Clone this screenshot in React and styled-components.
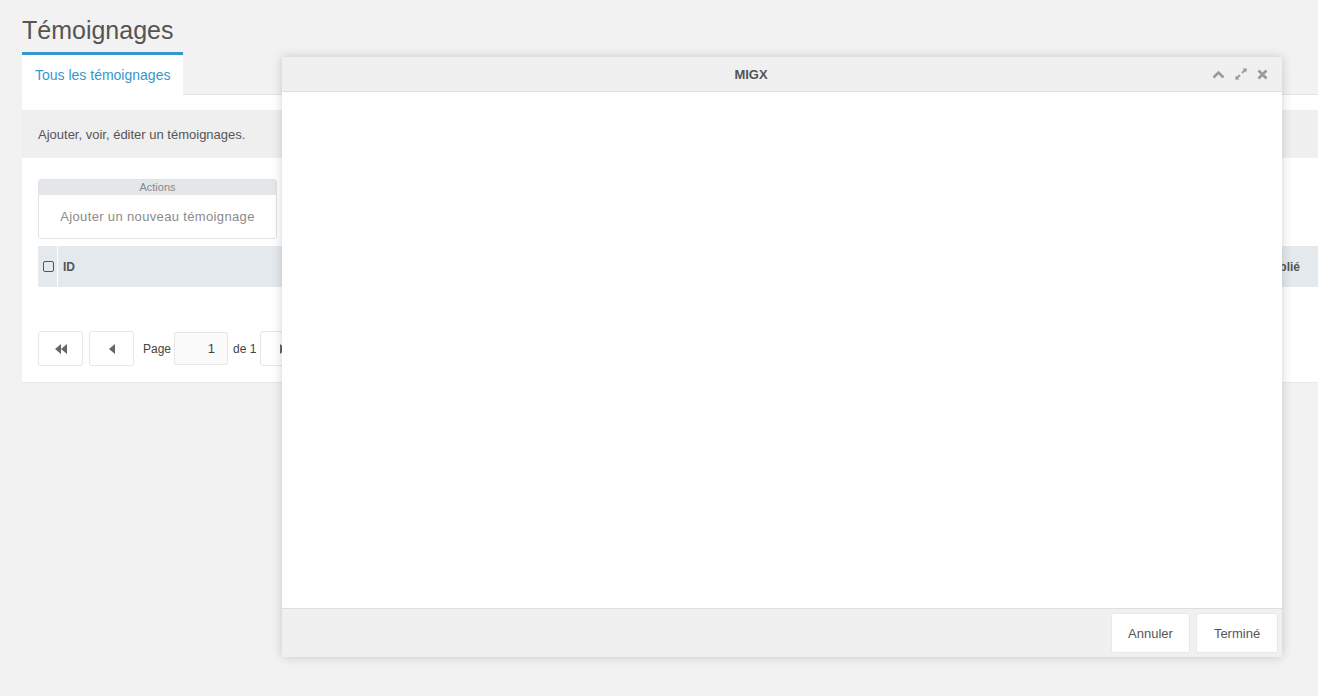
import React from "react";
import styled, { createGlobalStyle } from "styled-components";

const GlobalStyle = createGlobalStyle`
  html, body { margin: 0; padding: 0; }
  body {
    background: #f2f2f2;
    font-family: "Liberation Sans", Arial, Helvetica, sans-serif;
    color: #555;
    overflow: hidden;
  }
`;

const Page = styled.div`
  position: relative;
  width: 1318px;
  height: 696px;
  padding: 15px 0 0 22px;
  box-sizing: border-box;
  overflow: hidden;
`;

const Title = styled.h2`
  margin: 0;
  font-size: 25px;
  line-height: 30px;
  font-weight: normal;
  color: #555;
`;

const TabStrip = styled.div`
  display: flex;
  margin-top: 7px;
  position: relative;
  z-index: 1;
`;

const Tab = styled.div`
  height: 40px;
  border-top: 3px solid #3697cd;
  background: #fff;
  padding: 0 13px;
  display: flex;
  align-items: center;
  font-size: 14px;
  color: #3697cd;
  margin-bottom: -1px;
`;

const Panel = styled.div`
  background: #fff;
  border-top: 1px solid #e4e4e4;
  padding: 15px 0 16px;
  box-shadow: 0 1px 1px rgba(0, 0, 0, 0.04);
`;

const DescBar = styled.div`
  height: 48px;
  background: #efefef;
  display: flex;
  align-items: center;
  padding-left: 16px;
  font-size: 13px;
  color: #555;
`;

const Body = styled.div`
  padding-left: 16px;
`;

const ActionsBox = styled.div`
  width: 239px;
  margin-top: 21px;
  border: 1px solid #e2e2e2;
  border-radius: 3px;
  overflow: hidden;
  box-sizing: border-box;
`;

const ActionsHead = styled.div`
  height: 15px;
  background: #e4e7ea;
  text-align: center;
  font-size: 11px;
  line-height: 15px;
  color: #888;
`;

const ActionsBody = styled.div`
  height: 43px;
  display: flex;
  align-items: center;
  justify-content: center;
  font-size: 13px;
  letter-spacing: 0.35px;
  color: #8a8a8a;
  background: #fff;
`;

const TableHead = styled.div`
  margin-top: 7px;
  height: 41px;
  background: #e4e9ee;
  display: flex;
  align-items: center;
`;

const CheckCell = styled.div`
  width: 19px;
  height: 100%;
  display: flex;
  align-items: center;
  justify-content: center;
  border-right: 1px solid #fff;
`;

const CheckBox = styled.span`
  display: block;
  width: 9px;
  height: 9px;
  margin-left: 1px;
  border: 1.5px solid #555;
  border-radius: 2px;
`;

const HeadCell = styled.div`
  flex: ${(p) => (p.$grow ? 1 : "none")};
  padding: ${(p) => (p.$right ? "0 18px 0 0" : "0 0 0 5px")};
  font-size: 12px;
  font-weight: bold;
  color: #555;
`;

const Pager = styled.div`
  margin-top: 44px;
  display: flex;
  align-items: center;
  height: 35px;
`;

const PageButton = styled.div`
  width: 45px;
  height: 35px;
  box-sizing: border-box;
  border: 1px solid #e6e6e6;
  border-radius: 3px;
  background: #fff;
  display: flex;
  align-items: center;
  justify-content: center;
  margin-right: ${(p) => p.$mr || 0}px;
`;

const PagerText = styled.span`
  font-size: 12px;
  color: #444;
  margin: 0 ${(p) => p.$mr || 0}px 0 ${(p) => p.$ml || 0}px;
`;

const PageInput = styled.div`
  width: 54px;
  height: 33px;
  box-sizing: border-box;
  border: 1px solid #e6e6e6;
  border-radius: 2px;
  background: #fafafa;
  display: flex;
  align-items: center;
  justify-content: flex-end;
  padding-right: 12px;
  font-size: 13px;
  color: #444;
`;

const Modal = styled.div`
  position: absolute;
  left: 282px;
  top: 57px;
  width: 1000px;
  height: 600px;
  background: #fff;
  display: flex;
  flex-direction: column;
  box-shadow: 0 0 10px rgba(0, 0, 0, 0.18);
  z-index: 5;
`;

const ModalHead = styled.div`
  height: 34px;
  flex: none;
  background: #f0f0f0;
  border-bottom: 1px solid #dedede;
  position: relative;
  display: flex;
  align-items: center;
  justify-content: center;
  padding-right: 62px;
  font-size: 13px;
  font-weight: bold;
  color: #555;
`;

const HeadTools = styled.div`
  position: absolute;
  right: 14px;
  top: 0;
  height: 100%;
  display: flex;
  align-items: center;
  gap: 9px;
`;

const ModalBody = styled.div`
  flex: 1;
  background: #fff;
`;

const ModalFoot = styled.div`
  height: 48px;
  flex: none;
  background: #f0f0f0;
  border-top: 1px solid #dedede;
  display: flex;
  align-items: center;
  justify-content: flex-end;
  gap: 6px;
  padding-right: 4px;
`;

const FootButton = styled.div`
  width: ${(p) => p.$w}px;
  height: 40px;
  box-sizing: border-box;
  background: #fff;
  border: 1px solid #e8e8e8;
  border-radius: 3px;
  display: flex;
  align-items: center;
  justify-content: center;
  font-size: 13px;
  color: #555;
`;

const ChevronUp = () => (
  <svg width="13" height="9" viewBox="0 0 13 9">
    <path d="M1.5 7.5 L6.5 2.5 L11.5 7.5" fill="none" stroke="#9a9a9a" strokeWidth="2.6" />
  </svg>
);

const Expand = () => (
  <svg width="14" height="14" viewBox="0 0 14 14">
    <path d="M8 6 L12 2" stroke="#9a9a9a" strokeWidth="1.8" />
    <path d="M8.5 1.5 H12.5 V5.5 Z" fill="#9a9a9a" />
    <path d="M6 8 L2 12" stroke="#9a9a9a" strokeWidth="1.8" />
    <path d="M1.5 8.5 V12.5 H5.5 Z" fill="#9a9a9a" />
  </svg>
);

const Close = () => (
  <svg width="11" height="11" viewBox="0 0 11 11">
    <path d="M1.5 1.5 L9.5 9.5 M9.5 1.5 L1.5 9.5" stroke="#9a9a9a" strokeWidth="2.6" />
  </svg>
);

const DoubleLeft = () => (
  <svg width="12" height="10" viewBox="0 0 12 10">
    <path d="M6 0 V10 L0 5 Z M12 0 V10 L6 5 Z" fill="#666" />
  </svg>
);

const Left = () => (
  <svg width="6" height="10" viewBox="0 0 6 10">
    <path d="M6 0 V10 L0 5 Z" fill="#666" />
  </svg>
);

const Right = () => (
  <svg width="6" height="10" viewBox="0 0 6 10">
    <path d="M0 0 V10 L6 5 Z" fill="#666" />
  </svg>
);

export default function App() {
  return (
    <>
      <GlobalStyle />
      <Page>
        <Title>Témoignages</Title>
        <TabStrip>
          <Tab>Tous les témoignages</Tab>
        </TabStrip>
        <Panel>
          <DescBar>Ajouter, voir, éditer un témoignages.</DescBar>
          <Body>
            <ActionsBox>
              <ActionsHead>Actions</ActionsHead>
              <ActionsBody>Ajouter un nouveau témoignage</ActionsBody>
            </ActionsBox>
            <TableHead>
              <CheckCell>
                <CheckBox />
              </CheckCell>
              <HeadCell $grow>ID</HeadCell>
              <HeadCell $right>Publié</HeadCell>
            </TableHead>
            <Pager>
              <PageButton $mr={6}>
                <DoubleLeft />
              </PageButton>
              <PageButton>
                <Left />
              </PageButton>
              <PagerText $ml={9} $mr={3}>Page</PagerText>
              <PageInput>1</PageInput>
              <PagerText $ml={5} $mr={4}>de 1</PagerText>
              <PageButton $mr={6}>
                <Right />
              </PageButton>
            </Pager>
          </Body>
        </Panel>
        <Modal>
          <ModalHead>
            MIGX
            <HeadTools>
              <ChevronUp />
              <Expand />
              <Close />
            </HeadTools>
          </ModalHead>
          <ModalBody />
          <ModalFoot>
            <FootButton $w={79}>Annuler</FootButton>
            <FootButton $w={82}>Terminé</FootButton>
          </ModalFoot>
        </Modal>
      </Page>
    </>
  );
}
